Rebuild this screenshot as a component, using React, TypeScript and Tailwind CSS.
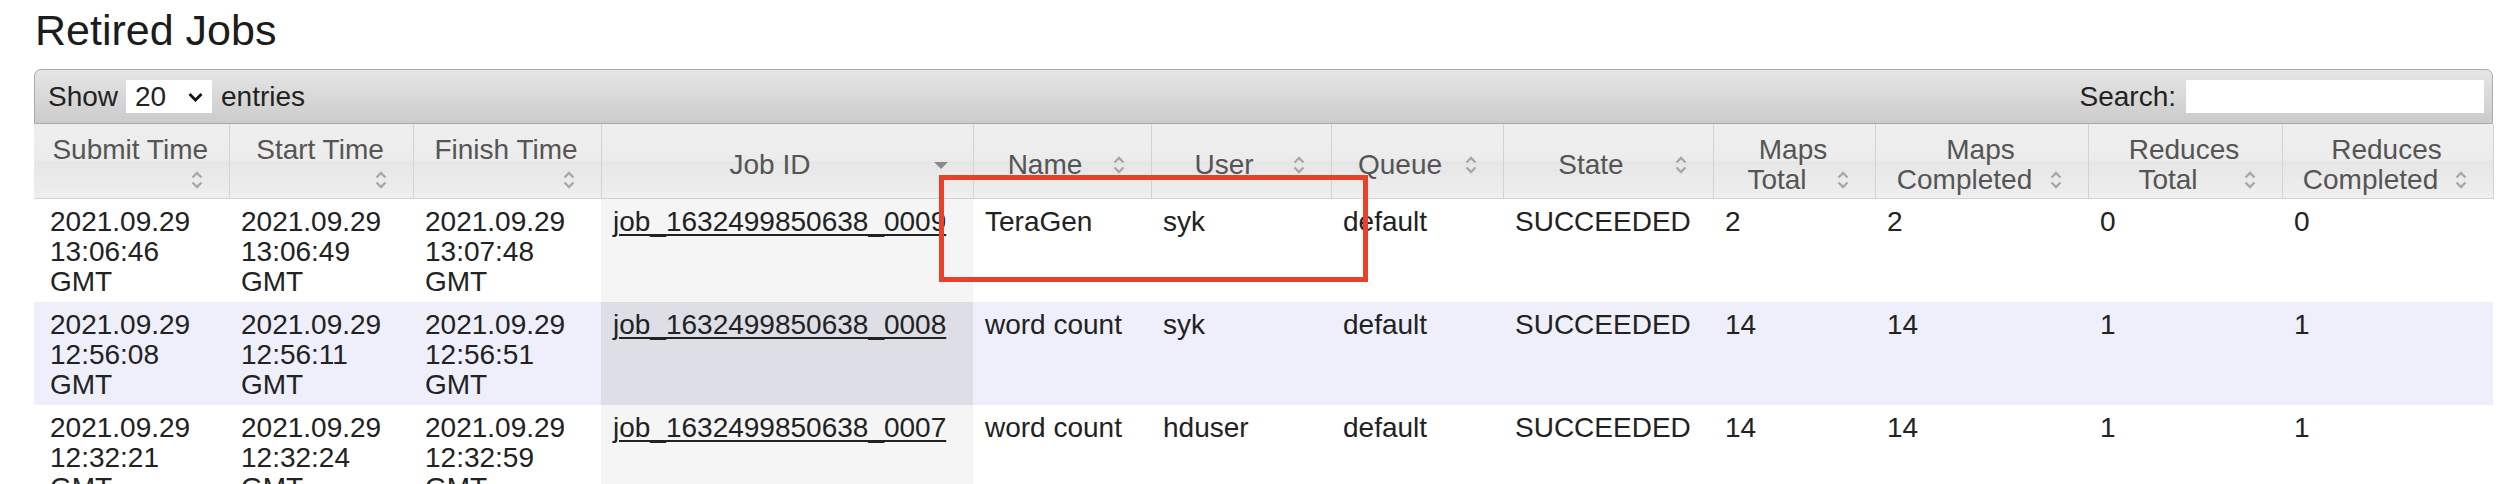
import React from "react";

type Col = { w: string; lines: string[]; icon: "both" | "desc" };

const cols: Col[] = [
  { w: "w-[195px]", lines: ["Submit Time", ""], icon: "both" },
  { w: "w-[184px]", lines: ["Start Time", ""], icon: "both" },
  { w: "w-[188px]", lines: ["Finish Time", ""], icon: "both" },
  { w: "w-[372px]", lines: ["Job ID"], icon: "desc" },
  { w: "w-[178px]", lines: ["Name"], icon: "both" },
  { w: "w-[180px]", lines: ["User"], icon: "both" },
  { w: "w-[172px]", lines: ["Queue"], icon: "both" },
  { w: "w-[210px]", lines: ["State"], icon: "both" },
  { w: "w-[162px]", lines: ["Maps", "Total"], icon: "both" },
  { w: "w-[213px]", lines: ["Maps", "Completed"], icon: "both" },
  { w: "w-[194px]", lines: ["Reduces", "Total"], icon: "both" },
  { w: "w-[211px]", lines: ["Reduces", "Completed"], icon: "both" },
];

type Row = {
  times: string[][];
  id: string;
  name: string;
  user: string;
  queue: string;
  state: string;
  nums: string[];
};

const rows: Row[] = [
  {
    times: [
      ["2021.09.29", "13:06:46", "GMT"],
      ["2021.09.29", "13:06:49", "GMT"],
      ["2021.09.29", "13:07:48", "GMT"],
    ],
    id: "job_1632499850638_0009",
    name: "TeraGen",
    user: "syk",
    queue: "default",
    state: "SUCCEEDED",
    nums: ["2", "2", "0", "0"],
  },
  {
    times: [
      ["2021.09.29", "12:56:08", "GMT"],
      ["2021.09.29", "12:56:11", "GMT"],
      ["2021.09.29", "12:56:51", "GMT"],
    ],
    id: "job_1632499850638_0008",
    name: "word count",
    user: "syk",
    queue: "default",
    state: "SUCCEEDED",
    nums: ["14", "14", "1", "1"],
  },
  {
    times: [
      ["2021.09.29", "12:32:21", "GMT"],
      ["2021.09.29", "12:32:24", "GMT"],
      ["2021.09.29", "12:32:59", "GMT"],
    ],
    id: "job_1632499850638_0007",
    name: "word count",
    user: "hduser",
    queue: "default",
    state: "SUCCEEDED",
    nums: ["14", "14", "1", "1"],
  },
];

function SortBoth() {
  return (
    <svg width="14" height="22" viewBox="0 0 14 22" className="block">
      <path d="M2.5 8.5 L7 4 L11.5 8.5" fill="none" stroke="#a8a8a8" strokeWidth="2.4" />
      <path d="M2.5 13.5 L7 18 L11.5 13.5" fill="none" stroke="#a8a8a8" strokeWidth="2.4" />
    </svg>
  );
}

function SortDesc() {
  return (
    <svg width="14" height="7" viewBox="0 0 14 7" className="block">
      <path d="M0 0 H14 L7 7 Z" fill="#8a8a8a" />
    </svg>
  );
}

function HeaderCell({ col }: { col: Col }) {
  const first = col.lines.slice(0, -1);
  const last = col.lines[col.lines.length - 1];
  return (
    <th
      className={`${col.w} h-[74px] pt-[9px] pb-0 px-0 border-r border-b border-[#d3d3d3] align-middle font-normal text-[#555555] text-[28px] leading-[30px] bg-[linear-gradient(to_bottom,#eeeeee_0%,#ececec_48%,#e6e6e6_52%,#efefef_100%)]`}
    >
      <div className="flex flex-col pl-[14px] pr-[16px]">
        {first.map((l) => (
          <div key={l} className="text-center whitespace-nowrap">
            {l}
          </div>
        ))}
        <div className="flex items-center min-h-[30px]">
          <div className="flex-1 text-center whitespace-nowrap">{last}</div>
          <div className="w-[32px] flex justify-center">
            {col.icon === "desc" ? <SortDesc /> : <SortBoth />}
          </div>
        </div>
      </div>
    </th>
  );
}

export default function App() {
  return (
    <div className="relative w-[2514px] h-[484px] overflow-hidden bg-white font-['Liberation_Sans',Arial,Helvetica,sans-serif] text-[#222222]">
      <div className="pl-[35px] pt-[6px] text-[43px] leading-[49px] text-[#1c1c1c]">Retired Jobs</div>

      <div className="ml-[34px] mt-[14px] w-[2459px]">
        <div className="h-[55px] rounded-t-[7px] border border-[#aaaaaa] bg-[linear-gradient(to_bottom,#e6e6e6,#cbcbcb)] flex items-center justify-between pl-[13px] pr-[8px] text-[28px] leading-[32px] text-[#222222]">
          <div className="flex items-center">
            <span>Show</span>
            <div className="ml-[8px] w-[86px] h-[33px] bg-white flex items-center justify-between pl-[9px] pr-[9px]">
              <span>20</span>
              <svg width="15" height="10" viewBox="0 0 15 10" className="block">
                <path d="M1.5 2 L7.5 8 L13.5 2" fill="none" stroke="#111111" strokeWidth="2.8" />
              </svg>
            </div>
            <span className="ml-[9px]">entries</span>
          </div>
          <div className="flex items-center">
            <span>Search:</span>
            <div className="ml-[10px] w-[298px] h-[33px] bg-white" />
          </div>
        </div>

        <table className="table-fixed border-collapse w-[2459px]">
          <thead>
            <tr>
              {cols.map((c) => (
                <HeaderCell key={c.lines.join("-")} col={c} />
              ))}
            </tr>
          </thead>
          <tbody className="text-[28px] leading-[30px] text-[#222222]">
            {rows.map((r, i) => {
              const even = i % 2 === 1;
              const rowBg = even ? "bg-[#efeffc]" : "bg-white";
              const sortBg = even ? "bg-[#dedee7]" : "bg-[#f5f5f5]";
              const td = "align-top pt-[8px] pb-[5px] pl-[12px] pr-[4px] h-[103px]";
              return (
                <tr key={r.id} className={rowBg}>
                  {r.times.map((t, k) => (
                    <td key={k} className={`${td} ${k === 0 ? "pl-[16px]" : ""}`}>
                      {t[0]}
                      <br />
                      {t[1]}
                      <br />
                      {t[2]}
                    </td>
                  ))}
                  <td className={`${td} ${sortBg}`}>
                    <a className="underline decoration-[2px] underline-offset-[3px] text-[#222222]">{r.id}</a>
                  </td>
                  <td className={td}>{r.name}</td>
                  <td className={td}>{r.user}</td>
                  <td className={td}>{r.queue}</td>
                  <td className={td}>{r.state}</td>
                  {r.nums.map((n, k) => (
                    <td key={k} className={td}>
                      {n}
                    </td>
                  ))}
                </tr>
              );
            })}
          </tbody>
        </table>
      </div>

      <div className="absolute left-[939px] top-[175px] w-[429px] h-[107px] border-[5px] border-[#e9402a]" />
    </div>
  );
}
